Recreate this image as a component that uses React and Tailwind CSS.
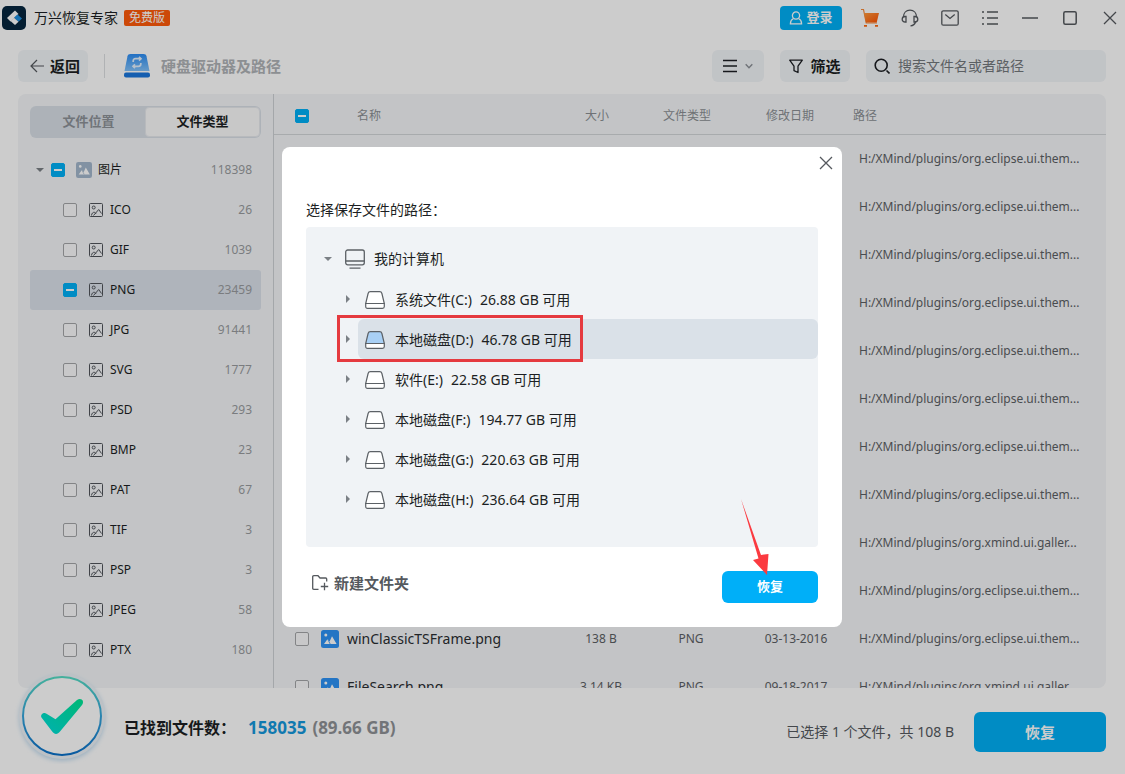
const FONT = "font-['Noto_Sans','Noto_Sans_CJK_SC',sans-serif]"

const fileTypes = [
  { name: 'ICO', count: 26 },
  { name: 'GIF', count: 1039 },
  { name: 'PNG', count: 23459, active: true },
  { name: 'JPG', count: 91441 },
  { name: 'SVG', count: 1777 },
  { name: 'PSD', count: 293 },
  { name: 'BMP', count: 23 },
  { name: 'PAT', count: 67 },
  { name: 'TIF', count: 3 },
  { name: 'PSP', count: 3 },
  { name: 'JPEG', count: 58 },
  { name: 'PTX', count: 180 },
]

const ECLIPSE = 'H:/XMind/plugins/org.eclipse.ui.them...'
const XMIND = 'H:/XMind/plugins/org.xmind.ui.galler...'

const files = [
  { path: ECLIPSE },
  { path: ECLIPSE },
  { path: ECLIPSE },
  { path: ECLIPSE },
  { path: ECLIPSE },
  { path: ECLIPSE },
  { path: ECLIPSE },
  { path: ECLIPSE },
  { path: XMIND },
  { path: ECLIPSE },
  { name: 'winClassicTSFrame.png', size: '138 B', type: 'PNG', date: '03-13-2016', path: ECLIPSE },
  { name: 'FileSearch.png', size: '3.14 KB', type: 'PNG', date: '09-18-2017', path: XMIND },
]

const drives = [
  { label: '系统文件', letter: 'C', free: '26.88 GB' },
  { label: '本地磁盘', letter: 'D', free: '46.78 GB', active: true },
  { label: '软件', letter: 'E', free: '22.58 GB' },
  { label: '本地磁盘', letter: 'F', free: '194.77 GB' },
  { label: '本地磁盘', letter: 'G', free: '220.63 GB' },
  { label: '本地磁盘', letter: 'H', free: '236.64 GB' },
]

function Checkbox({ label, partial }) {
  return (
    <span className="relative flex h-3.5 w-3.5 shrink-0">
      <input
        type="checkbox"
        aria-label={label}
        ref={(el) => {
          if (el) el.indeterminate = !!partial
        }}
        className="h-3.5 w-3.5 appearance-none rounded-[2px] border border-[#a4a6a8] bg-[#fafbfc] indeterminate:border-[#00aff5] indeterminate:bg-[#00aff5]"
      />
      {partial && (
        <svg viewBox="0 0 14 14" className="pointer-events-none absolute inset-0 h-3.5 w-3.5">
          <path d="M3 7h8" stroke="#fff" strokeWidth="2" />
        </svg>
      )}
    </span>
  )
}

function Caret({ open }) {
  return (
    <svg viewBox="0 0 8 8" className="h-2 w-2 shrink-0" fill="#7b8085">
      {open ? <path d="M0 2h8L4 6z" /> : <path d="M2 0v8l4-4z" />}
    </svg>
  )
}

function ImageOutline() {
  return (
    <svg viewBox="0 0 14 14" className="h-3.5 w-3.5 shrink-0" fill="none" stroke="#50545a">
      <rect x=".5" y=".5" width="13" height="13" rx="1" />
      <circle cx="4.700" cy="4.500" r="1.500" />
      <path d="M2.500 12.500c.3-2.200 1.300-3.300 3-3.300L7.200 11M4.500 12.500L9.700 6.500l2.800 4" />
    </svg>
  )
}

function ImageSolid({ className, color }) {
  return (
    <svg viewBox="0 0 18 18" className={className}>
      <rect width="18" height="18" rx="2.500" fill={color} />
      <circle cx="4.800" cy="5" r="1.500" fill="#fff" />
      <path d="M3 14l3.600-5 2 2.600L11 6.300 15.600 14z" fill="#fff" />
      <path d="M6.600 9l2.600 5" stroke={color} strokeWidth=".8" />
    </svg>
  )
}

function DriveIcon({ active }) {
  return (
    <svg viewBox="0 0 20 18" className="h-[18px] w-5 shrink-0" fill="none" stroke="#5c6166" strokeWidth="1.200">
      <path d="M5.400.7h9.200c1.200 0 2 .6 2.300 1.800l2.400 10H.7l2.400-10C3.400 1.300 4.200.7 5.400.7z" fill={active ? '#a9d0f5' : '#fff'} />
      <path d="M.7 12.500h18.600v3c0 1.200-.6 1.800-1.800 1.800h-15C1.300 17.300.7 16.700.7 15.500z" fill="#fff" />
    </svg>
  )
}

function CloseIcon() {
  return (
    <svg viewBox="0 0 14 14" className="h-3.5 w-3.5" stroke="#55595e" strokeWidth="1.300">
      <path d="M1 1l12 12M13 1L1 13" />
    </svg>
  )
}

function IconButton({ label, children }) {
  return (
    <button type="button" aria-label={label} className="flex h-6 w-6 items-center justify-center">
      {children}
    </button>
  )
}

function TitleBar() {
  return (
    <header className="flex h-9 shrink-0 items-center pl-0.5 pr-[3px]">
      <svg viewBox="0 0 24 24" className="h-6 w-6">
        <rect width="24" height="24" rx="5" fill="#06263f" />
        <path d="M5 12l8-7.500 3.500 3.500-8 7.500z" fill="#fff" />
        <path d="M15.500 8.500l4.500 4-3.500 3.200-4.500-4z" fill="#1c8fe0" />
        <path d="M12 11.800l4.500 3.900-3.500 3.300-4.500-4z" fill="#fff" />
      </svg>
      <h1 className="ml-2 text-sm text-[#1c1f23]">万兴恢复专家</h1>
      <span className="ml-1.5 rounded-[2px] bg-[#ff5a0a] px-[5px] text-xs leading-4 text-white">免费版</span>
      <div className="ml-auto flex items-center gap-4">
        <button type="button" className="flex h-6 w-[62px] items-center justify-center gap-[3px] rounded bg-[#00aff5] text-[13px] font-bold text-white">
          <svg viewBox="0 0 14 14" className="h-3.5 w-3.5" fill="none" stroke="#fff" strokeWidth="1.300">
            <circle cx="7" cy="4.500" r="3.600" />
            <path d="M4.500 7.500C2.500 8.500 1.400 10 1.400 12.800h11.200c0-2.800-1.100-4.300-3.100-5.300" />
          </svg>
          登录
        </button>
        <IconButton label="购物车">
          <svg viewBox="0 0 20 20" className="h-5 w-5">
            <defs>
              <linearGradient id="cart" x1="0" y1="0" x2="1" y2="1">
                <stop offset="0" stopColor="#ff9a3d" />
                <stop offset="1" stopColor="#ff5000" />
              </linearGradient>
            </defs>
            <path d="M1 1.500h2.500L6.200 15H17" fill="none" stroke="#f58a3a" strokeWidth="1.200" />
            <path d="M4 5h15l-2.300 9.500H6z" fill="url(#cart)" />
            <path d="M4 17h3v1.800H4zM15 17h3v1.800h-3z" fill="#ff6a10" />
          </svg>
        </IconButton>
        <IconButton label="客服">
          <svg viewBox="0 0 18 18" className="h-[18px] w-[18px]" fill="none" stroke="#55595e" strokeWidth="1.300">
            <path d="M2.500 8C2.500 4 5 1.200 9 1.200s6.500 2.800 6.500 6.800" />
            <path d="M5 7.500v5.500h-.8C2.400 13 1.200 12 1.200 10.300S2.400 7.500 4.200 7.500zM13 7.500v5.500h.8c1.800 0 3-1 3-2.700s-1.200-2.800-3-2.800z" />
            <path d="M14.500 13c-.6 2.300-2 3.600-5 3.800" />
          </svg>
        </IconButton>
        <IconButton label="消息">
          <svg viewBox="0 0 18 18" className="h-[18px] w-[18px]" fill="none" stroke="#55595e" strokeWidth="1.300">
            <rect x=".8" y="1.800" width="16.400" height="14.400" rx="1.500" />
            <path d="M4.300 5.500L9 9.500l4.700-4" />
          </svg>
        </IconButton>
        <IconButton label="菜单">
          <svg viewBox="0 0 16 16" className="h-4 w-4" stroke="#55595e" strokeWidth="1.400">
            <path d="M0 2h2M5 2h11M0 8h2M5 8h11M0 14h2M5 14h11" />
          </svg>
        </IconButton>
        <IconButton label="最小化">
          <svg viewBox="0 0 16 16" className="h-4 w-4" stroke="#55595e" strokeWidth="1.500">
            <path d="M0 8h16" />
          </svg>
        </IconButton>
        <IconButton label="最大化">
          <svg viewBox="0 0 14 14" className="h-3.5 w-3.5" fill="none" stroke="#55595e" strokeWidth="1.500">
            <rect x=".8" y=".8" width="12.400" height="12.400" rx="1.500" />
          </svg>
        </IconButton>
        <IconButton label="关闭窗口">
          <CloseIcon />
        </IconButton>
      </div>
    </header>
  )
}

function Toolbar() {
  return (
    <div className="flex shrink-0 items-center pb-3 pl-[18px] pr-[19px] pt-3.5">
      <button type="button" className="flex h-8 items-center gap-1.5 rounded-md bg-[#f2f5f8] px-2 pl-3 text-[15px] font-bold text-[#1c1f23]">
        <svg viewBox="0 0 14 14" className="h-3.5 w-3.5" fill="none" stroke="#55595e" strokeWidth="1.200">
          <path d="M14 7H1M7 1L1 7l6 6" />
        </svg>
        返回
      </button>
      <div className="ml-4 h-6 w-px bg-[#dcdfe2]" />
      <svg viewBox="0 0 26 24" className="ml-[19px] h-6 w-[26px]">
        <defs>
          <linearGradient id="disk" x1="0" y1="0" x2="0" y2="1">
            <stop offset="0" stopColor="#2b8df5" />
            <stop offset="1" stopColor="#82c2fa" />
          </linearGradient>
        </defs>
        <path d="M6.500 0h13c1.700 0 2.600.7 3 2.300L25.500 17H.5L3.500 2.300C3.900.7 4.800 0 6.500 0z" fill="url(#disk)" />
        <rect y="18.500" width="26" height="5" rx="2" fill="#1976dc" />
        <g fill="none" stroke="#e3f1fe" strokeWidth="1.700">
          <path d="M9.200 8V7c0-1.500.8-2.300 2.300-2.300h5M16.800 9v1c0 1.500-.8 2.300-2.300 2.300h-5" />
          <path d="M15 2.800l2 1.900-2 1.900M11 10.400l-2 1.900 2 1.900" />
        </g>
      </svg>
      <h2 className="ml-[11px] text-[15px] font-bold text-[#b0b3b7]">硬盘驱动器及路径</h2>
      <div className="ml-auto flex items-center gap-4">
        <button type="button" aria-label="视图" className="flex h-8 w-[52px] items-center justify-center gap-2 rounded-md bg-[#f2f5f8]">
          <svg viewBox="0 0 14 14" className="h-3.5 w-3.5" stroke="#1c1f23" strokeWidth="1.600">
            <path d="M0 1.500h14M0 7h14M0 12.500h14" />
          </svg>
          <svg viewBox="0 0 8 8" className="h-2 w-2" fill="none" stroke="#8b9096" strokeWidth="1.400">
            <path d="M.7 2.300L4 5.700l3.300-3.400" />
          </svg>
        </button>
        <button type="button" className="flex h-8 w-[70px] items-center justify-center gap-[7px] rounded-md bg-[#f2f5f8] text-[15px] font-bold text-[#1c1f23]">
          <svg viewBox="0 0 14 15" className="h-[15px] w-3.5" fill="none" stroke="#1c1f23" strokeWidth="1.300" strokeLinejoin="round">
            <path d="M.7 1.200h12.600L9 7.200v6.300l-4-1.800V7.200z" />
          </svg>
          筛选
        </button>
        <label className="flex h-8 w-60 items-center gap-2 rounded-md bg-[#f2f5f8] px-2">
          <svg viewBox="0 0 16 16" className="h-4 w-4 shrink-0" fill="none" stroke="#1c1f23" strokeWidth="1.600">
            <circle cx="7.200" cy="7.200" r="6" />
            <path d="M12.500 12.500l3 3" />
          </svg>
          <input
            type="search"
            aria-label="搜索"
            placeholder="搜索文件名或者路径"
            className="w-full min-w-0 bg-transparent text-sm outline-none placeholder:text-[#74787c]"
          />
        </label>
      </div>
    </div>
  )
}

function Sidebar() {
  return (
    <aside className="w-64 shrink-0 border-r border-[#cdd1d5] px-3 pt-3">
      <div className="flex h-8 rounded-md bg-[#d9dfe7] p-px pl-0.5">
        <button type="button" className="flex-1 rounded text-[13px] font-bold text-[#8d9298]">文件位置</button>
        <button type="button" className="flex-1 rounded border border-[#e6e9ed] bg-[#fafafb] text-[13px] font-bold text-[#1c1f23]">文件类型</button>
      </div>
      <ul className="mt-3 text-xs">
        <li className="flex h-10 items-center pl-1.5 pr-[9px]">
          <Caret open />
          <span className="ml-[7px]">
            <Checkbox label="图片" partial />
          </span>
          <ImageSolid className="ml-[11px] h-4 w-4" color="#a3b7cc" />
          <span className="ml-1.5 text-[#1c1f23]">图片</span>
          <span className="ml-auto text-[#999c9f]">118398</span>
        </li>
        {fileTypes.map((type) => (
          <li
            key={type.name}
            className={`flex h-10 items-center rounded-[3px] pl-[33px] pr-[9px] ${type.active ? 'bg-[#dbe1ea]' : ''}`}
          >
            <Checkbox label={type.name} partial={type.active} />
            <span className="ml-3">
              <ImageOutline />
            </span>
            <span className="ml-[7px] text-[#1c1f23]">{type.name}</span>
            <span className="ml-auto text-[#999c9f]">{type.count}</span>
          </li>
        ))}
      </ul>
    </aside>
  )
}

function FileTable() {
  return (
    <div className="min-w-0 flex-1 overflow-hidden">
      <table className="w-full table-fixed border-separate border-spacing-0 text-xs text-[#5c6064]">
        <colgroup>
          <col className="w-[47px]" />
          <col />
          <col className="w-[90px]" />
          <col className="w-[90px]" />
          <col className="w-[116px]" />
          <col className="w-[258px]" />
        </colgroup>
        <thead className="text-[#8b8f94]">
          <tr className="h-[41px] *:border-b *:border-[#d3d6d9] *:pt-1 *:font-normal">
            <th className="pl-[21px]">
              <Checkbox label="全选" partial />
            </th>
            <th className="pl-9 text-left">名称</th>
            <th>大小</th>
            <th>文件类型</th>
            <th>修改日期</th>
            <th className="pl-[5px] text-left">路径</th>
          </tr>
        </thead>
        <tbody>
          {files.map((file, i) => (
            <tr key={i} className="h-12">
              <td className="pl-[21px]">
                <Checkbox label={file.name} />
              </td>
              <td>
                <div className="flex items-center gap-2 text-sm text-[#2a2d31]">
                  <ImageSolid className="h-[18px] w-[18px] shrink-0" color="#2e93f5" />
                  {file.name}
                </div>
              </td>
              <td className="pl-2 text-center">{file.size}</td>
              <td className="pl-2 text-center">{file.type}</td>
              <td className="pl-3 text-center">{file.date}</td>
              <td className="whitespace-nowrap pl-[11px]">{file.path}</td>
            </tr>
          ))}
        </tbody>
      </table>
    </div>
  )
}

function Footer() {
  return (
    <footer className="relative flex shrink-0 items-start justify-between pb-[22px] pl-[124px] pr-[19px] pt-6">
      <svg viewBox="0 0 96 96" className="absolute -top-5 left-3.5 h-24 w-24">
        <defs>
          <linearGradient id="ring" x1="0" y1="0" x2="0" y2="1">
            <stop offset="0" stopColor="#55dcc4" />
            <stop offset=".5" stopColor="#35a5dc" />
            <stop offset="1" stopColor="#0a70c8" />
          </linearGradient>
          <linearGradient id="tick" x1="1" y1="0" x2="0" y2="1">
            <stop offset="0" stopColor="#00e693" />
            <stop offset="1" stopColor="#00dede" />
          </linearGradient>
          <filter id="soft" x="-20%" y="-20%" width="140%" height="140%">
            <feGaussianBlur stdDeviation="2" />
          </filter>
        </defs>
        <circle cx="48" cy="50" r="43" fill="#c6dff2" filter="url(#soft)" />
        <circle cx="48" cy="48" r="43" fill="#edf2f7" />
        <circle cx="48" cy="48" r="39" fill="#fff" stroke="url(#ring)" strokeWidth="2" />
        <path d="M27.500 49.500c-1.600-3 2.300-6 5-3.800l9 5.600L63 32c4-3 8 .8 5 5L46 63.500c-2.500 3.200-5.500 3.200-7.800 0z" fill="url(#tick)" />
      </svg>
      <p className="flex items-center text-base font-bold leading-8 text-[#1c1f23]">
        已找到文件数：
        <span className="ml-3 text-[17px] text-[#1598dc]">158035</span>
        <span className="ml-1.5 text-[17px] text-[#8f9296]">(89.66 GB)</span>
      </p>
      <div className="flex items-center gap-5">
        <span className="text-sm text-[#55595e]">已选择 1 个文件，共 108 B</span>
        <button type="button" className="h-10 w-[132px] rounded-md bg-[#00aff5] text-[15px] font-bold text-white">恢复</button>
      </div>
    </footer>
  )
}

function DriveTree() {
  return (
    <div className="h-80 rounded bg-[#f0f3f6] pt-3 text-sm text-[#1c1f23]">
      <div className="flex h-10 items-center pl-[18px]">
        <Caret open />
        <svg viewBox="0 0 20 20" className="ml-[13px] h-5 w-5" fill="none" stroke="#5c6166" strokeWidth="1.300">
          <rect x=".7" y="1" width="18.600" height="14.800" rx="2" />
          <path d="M.7 12h18.600M4.500 19.200h11" />
        </svg>
        <span className="ml-[9px]">我的计算机</span>
      </div>
      <ul>
        {drives.map((drive) => (
          <li key={drive.letter} className="relative flex h-10 items-center pl-[38px]">
            <Caret />
            <div
              className={`ml-1.5 flex h-10 flex-1 items-center rounded-md pl-[7px] pt-0.5 ${drive.active ? 'bg-[#dae1e8]' : ''}`}
            >
              <DriveIcon active={drive.active} />
              <span className="ml-2.5">{drive.label}({drive.letter}:)</span>
              <span className="ml-2">{drive.free} 可用</span>
            </div>
            {drive.active && (
              <div className="pointer-events-none absolute -top-1 left-[31px] h-[47px] w-[246px] border-[3px] border-[#e53a3f]" />
            )}
          </li>
        ))}
      </ul>
    </div>
  )
}

function SaveDialog() {
  return (
    <div className="fixed inset-0 flex items-center justify-center bg-black/20 pr-px">
      <div role="dialog" aria-label="选择保存文件的路径" className="w-[560px] rounded-lg bg-white px-6 pb-6">
        <div className="-mr-5 flex h-8 items-center justify-end">
          <IconButton label="关闭">
            <CloseIcon />
          </IconButton>
        </div>
        <p className="pb-1.5 pt-5 text-sm leading-[22px] text-[#1c1f23]">选择保存文件的路径：</p>
        <DriveTree />
        <div className="relative mt-6 flex items-center justify-between">
          <button type="button" className="flex h-6 items-center gap-1 self-start pl-1.5 text-[15px] font-bold text-[#55595e]">
            <svg viewBox="0 0 18 18" className="h-[18px] w-[18px]" fill="none" stroke="#55595e" strokeWidth="1.300">
              <path d="M6.500 15.300H1.800C1 15.300.7 15 .7 14.200V2.800C.7 2 1 1.700 1.800 1.700H6l2 2.300h5.600c.8 0 1.100.3 1.100 1.100v2.400" />
              <path d="M8.800 12.500h7.400M12.500 8.800v7.400" />
            </svg>
            新建文件夹
          </button>
          <button type="button" className="h-8 w-24 rounded-md bg-[#00aff8] text-[13px] font-bold text-white">恢复</button>
          <svg viewBox="0 0 30 76" className="pointer-events-none absolute -top-[72px] right-12 h-[76px] w-[30px]">
            <path d="M1 0l20 56 7.500-1-1.500 21-14-15 5.500-1.500z" fill="#fb3a40" />
          </svg>
        </div>
      </div>
    </div>
  )
}

export default function App() {
  return (
    <div className={`flex h-screen flex-col overflow-hidden bg-white ${FONT}`}>
      <TitleBar />
      <Toolbar />
      <main className="ml-[18px] mr-[19px] flex min-h-0 flex-1 overflow-hidden rounded-lg bg-[#f4f6f8]">
        <Sidebar />
        <FileTable />
      </main>
      <Footer />
      <SaveDialog />
    </div>
  )
}
